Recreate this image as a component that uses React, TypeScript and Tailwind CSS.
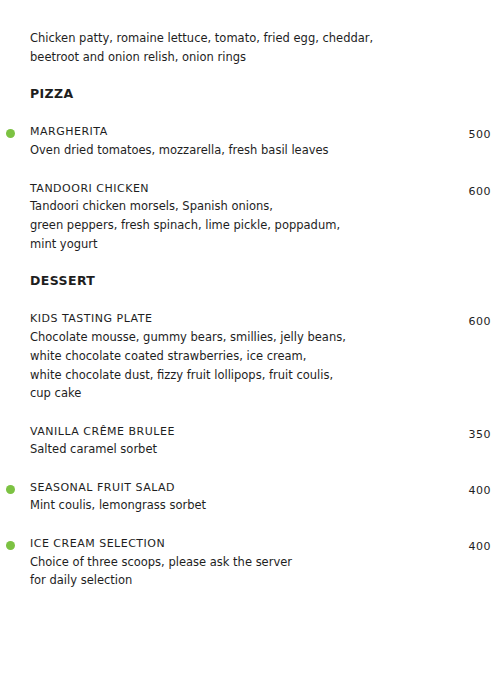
import React from "react";

type Item = { name: string; lines: string[]; price: string; veg?: boolean };

const pizza: Item[] = [
  { name: "MARGHERITA", lines: ["Oven dried tomatoes, mozzarella, fresh basil leaves"], price: "500", veg: true },
  {
    name: "TANDOORI CHICKEN",
    lines: ["Tandoori chicken morsels, Spanish onions,", "green peppers, fresh spinach, lime pickle, poppadum,", "mint yogurt"],
    price: "600",
  },
];

const dessert: Item[] = [
  {
    name: "KIDS TASTING PLATE",
    lines: [
      "Chocolate mousse, gummy bears, smillies, jelly beans,",
      "white chocolate coated strawberries, ice cream,",
      "white chocolate dust, fizzy fruit lollipops, fruit coulis,",
      "cup cake",
    ],
    price: "600",
  },
  { name: "VANILLA CRÊME BRULEE", lines: ["Salted caramel sorbet"], price: "350" },
  { name: "SEASONAL FRUIT SALAD", lines: ["Mint coulis, lemongrass sorbet"], price: "400", veg: true },
  {
    name: "ICE CREAM SELECTION",
    lines: ["Choice of three scoops, please ask the server", "for daily selection"],
    price: "400",
    veg: true,
  },
];

function Row({ item }: { item: Item }) {
  return (
    <div className="flex mb-[18.7px]">
      <div className="w-[30px] shrink-0 flex">
        {item.veg ? <div className="mt-[7px] ml-[6px] w-[9px] h-[9px] rounded-full bg-[#7cc242]" /> : null}
      </div>
      <div className="flex-1">
        <div className="text-[11px] tracking-[0.5px] pt-[1px] -mb-[1px]">{item.name}</div>
        {item.lines.map((l, i) => (
          <div key={i}>{l}</div>
        ))}
      </div>
      <div className="w-[60px] shrink-0 text-right pr-[9px] pt-[4px] text-[11px] tracking-[0.5px]">{item.price}</div>
    </div>
  );
}

function Heading({ children }: { children: React.ReactNode }) {
  return (
    <div className="pl-[30px] mb-[18.7px] font-bold text-[12.5px] tracking-[0.4px]">{children}</div>
  );
}

export default function App() {
  return (
    <div
      className="w-[500px] h-[700px] bg-white text-[#1e1e1e] text-[11.5px] leading-[18.7px] pt-[29px]"
      style={{ fontFamily: '"DejaVu Sans", sans-serif' }}
    >
      <div className="pl-[30px] mb-[18.7px]">
        <div>Chicken patty, romaine lettuce, tomato, fried egg, cheddar,</div>
        <div>beetroot and onion relish, onion rings</div>
      </div>
      <Heading>PIZZA</Heading>
      {pizza.map((it) => (
        <Row key={it.name} item={it} />
      ))}
      <Heading>DESSERT</Heading>
      {dessert.map((it) => (
        <Row key={it.name} item={it} />
      ))}
    </div>
  );
}
